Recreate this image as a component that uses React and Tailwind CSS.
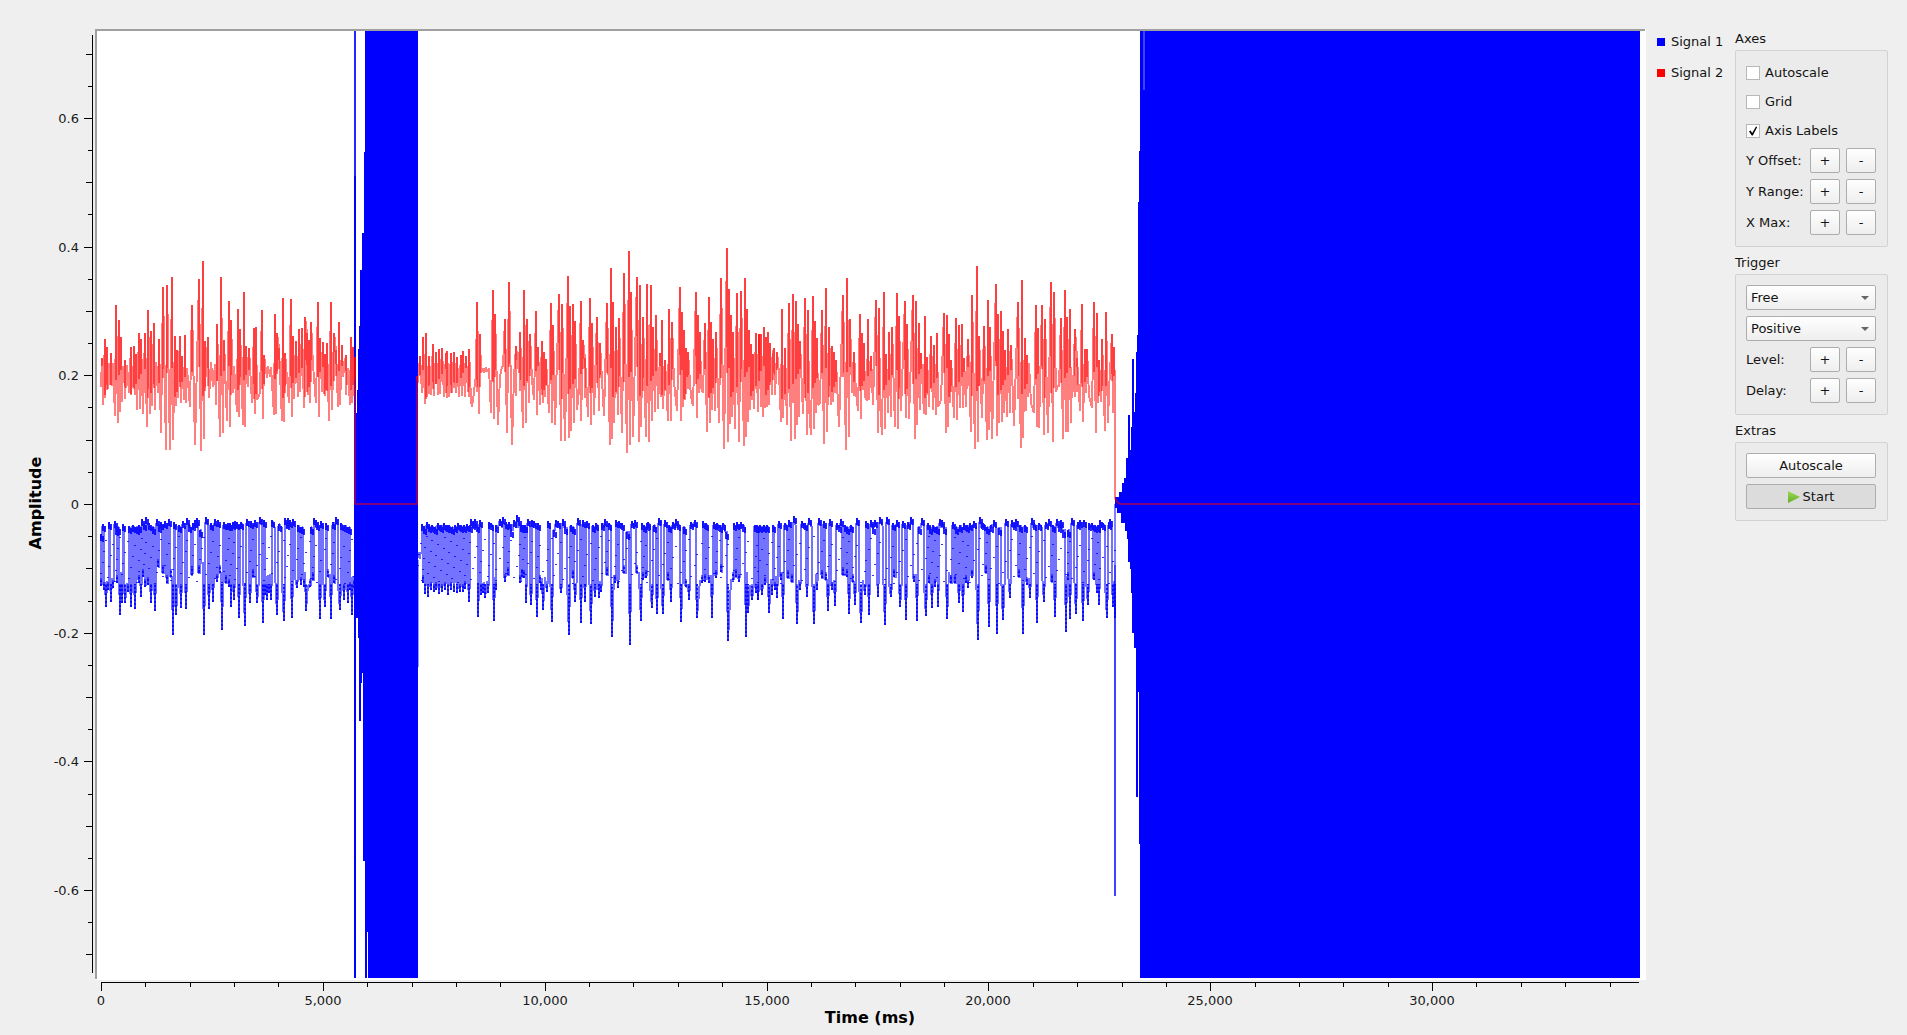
import { useState } from 'react';

// Traces are x,y pairs on a 3x grid, relative to the segment's origin on the plot.
const SIGNAL_2 = [
  {
    origin: 80,
    points:
      '62,440 64,470 66,385 70,525 74,328 76,505 80,352 84,478 87,400 90,465 92,370 96,468 99,400 105,558 108,226 113,580 116,270 120,545 123,322 127,515 130,408 134,470 134,390 138,475 142,405 146,490 152,352 154,495 158,410 160,470 162,348 166,495 168,372 172,540 177,310 181,538 184,328 190,552 194,310 200,592 204,240 209,552 212,303 216,528 221,280 225,540 228,397 233,490 237,328 244,608 250,172 257,660 261,166 270,660 275,140 279,630 285,318 289,527 291,360 295,503 300,318 304,520 307,378 312,510 315,316 318,520 321,415 330,530 336,226 344,645 357,148 363,664 368,92 372,628 375,332 379,440 383,322 388,503 393,395 399,472 404,402 408,525 411,283 419,620 424,140 429,608 432,330 440,573 446,214 450,592 454,270 458,490 462,408 470,545 474,238 477,562 480,298 488,585 491,187 495,590 498,348 504,470 507,355 517,520 521,295 525,553 528,292 532,510 540,490 545,240 549,568 553,375 560,445 565,408 570,440 573,412 581,555 585,253 589,553 592,310 598,355 605,572 609,205 612,577 616,370 627,520 633,208 636,562 639,318 642,508 648,332 654,502 657,298 661,485 665,295 671,535 675,260 680,310 684,495 687,330 690,520 694,275 700,405 709,518 715,216 718,562 720,325 726,485 728,337 732,492 736,372 738,480 741,340 747,572 752,215 757,540 762,310 768,360 773,532 777,277 780,525 786,346 790,440 797,374 800,465 803,415 809,525 813,322 815,520 820,352 822,498 825,380',
  },
  {
    origin: 400,
    points:
      '51,437 55,460 60,377 65,490 69,322 75,523 78,310 82,500 87,378 94,495 99,343 103,497 107,367 113,495 117,358 121,493 127,353 131,500 137,368 139,490 141,363 146,500 153,370 157,490 161,367 168,490 172,380 176,500 182,375 186,497 190,362 195,500 198,378 203,487 207,358 212,510 216,532 222,488 226,455 229,440 232,217 236,552 240,312 243,430 248,415 253,430 258,412 262,425 266,415 272,548 279,181 282,568 286,252 293,586 300,440 306,408 310,410 315,268 321,608 326,155 335,646 343,440 349,347 356,430 360,307 368,594 373,181 378,578 382,268 387,520 391,313 396,450 403,510 408,244 411,555 414,352 420,525 426,334 430,520 433,365 436,500 438,388 446,550 453,220 456,580 460,285 466,586 477,193 483,633 487,222 496,632 504,137 507,625 510,228 514,604 518,223 522,580 525,273 530,540 537,480 542,214 544,574 549,330 556,385 564,562 570,205 573,584 577,280 583,556 591,262 597,543 601,338 613,558 621,220 629,646 633,115 637,627 640,217 643,580 647,290 653,555 657,265 665,609 672,130 681,670 687,64 690,646 693,187 699,622 711,142 717,637 720,166 724,592 729,262 737,622 741,163 748,637 753,166 757,574 760,290 765,547 769,256 774,538 780,370 783,500 786,271 789,538 795,390 803,574 808,238 813,572 817,277 822,455 832,543 840,172 843,572 846,247 849,532 852,300 856,510 859,355 862,440 865,367 872,500 878,527 888,187 892,565 894,256 897,490 900,305 902,470 908,488 914,280 921,607 927,202 931,580 934,277 937,540 940,327 945,542 948,307 957,580 963,145 972,658 981,55 984,637 987,178 991,583 993,256 996,560 999,305 1006,597 1011,190 1018,637 1023,184 1032,648 1035,145 1038,622 1041,238 1045,575 1047,300 1050,540 1053,343 1056,510 1059,373 1062,538 1068,310 1073,545 1077,313',
  },
  {
    origin: 740,
    points:
      '57,313 62,530 64,312 69,562 72,292 76,535 79,320 81,530 84,305 87,525 90,340 95,495 99,370 102,355 105,495 110,365 116,430 122,577 126,238 129,565 135,355 142,585 147,220 153,634 158,193 165,627 168,214 171,585 174,283 177,560 181,333 188,552 195,205 201,616 204,240 207,530 213,616 219,199 223,597 225,274 228,550 230,325 235,525 241,520 246,240 252,643 258,175 262,605 266,290 272,525 276,349 280,516 283,365 286,490 289,390 298,590 309,196 317,660 321,145 327,620 330,268 336,490 342,367 348,485 355,543 360,253 363,568 366,310 369,480 372,340 376,500 380,514 384,268 388,510 392,378 400,525 408,211 414,610 417,235 420,520 427,615 432,187 436,597 438,372 443,550 447,307 452,560 456,292 464,590 471,190 474,597 478,257 484,543 495,214 498,565 500,283 506,568 519,196 524,627 528,214 532,585 537,280 540,540 543,370 552,553 555,259 558,555 562,380 568,530 573,319 578,540 583,346 588,555 591,310 595,530 603,510 612,250 617,608 621,256 624,590 627,313 630,520 634,390 637,435 643,565 648,265 652,570 656,284 661,535 666,283 669,535 673,385 679,532 684,328 692,605 697,196 705,658 711,109 715,637 718,319 725,565 732,289 740,630 744,211 748,600 750,290 757,628 768,163 771,619 774,253 778,580 783,244 787,575 789,304 793,550 796,360 800,560 804,298 810,550 813,346 822,587 835,217 842,655 846,151 850,625 855,325 859,543 861,376 864,500 867,400 873,520 881,548 888,226 892,590 894,295 898,595 907,226 912,615 915,268 925,610 934,157 939,637 942,187 947,485 954,465 958,470 963,265 969,628 975,181 979,605 981,262 985,605 989,238 992,580 995,435 1000,487 1005,298 1011,385 1020,544 1026,223 1030,577 1034,358 1038,490 1041,358 1046,497 1055,535 1062,217 1068,610 1071,250 1074,520 1078,390 1082,515 1087,328 1096,602 1099,247 1103,580 1108,480 1116,313 1120,548 1122,352 1125,480',
  },
];

const SIGNAL_1 = [
  {
    origin: 80,
    points:
      '62,912 64,1068 69,882 73,1080 78,1130 84,1080 87,876 92,1115 98,1075 104,872 108,895 112,1060 115,890 120,1155 126,1120 129,882 136,1120 143,1085 147,888 152,1130 159,884 165,1138 171,892 176,1060 178,885 182,1100 186,866 190,1040 192,880 194,1070 198,862 203,1065 207,878 214,1118 219,892 225,1143 230,868 234,1010 238,885 242,875 250,1030 255,872 261,1060 267,868 274,1040 279,1215 281,876 288,1155 296,886 302,1135 309,873 317,1138 322,865 327,885 336,1035 340,880 345,870 352,865 357,1030 360,900 366,1000 372,1215 378,862 388,1138 394,878 399,1115 404,868 411,1055 414,870 420,1030 427,1200 432,876 439,1060 443,880 447,1070 450,880 454,1130 459,875 462,1110 466,872 471,875 477,1165 483,875 494,1187 500,866 510,1120 514,872 520,1040 525,870 531,1120 540,860 549,1178 552,870 556,1095 560,1110 566,1090 572,1110 577,870 590,1155 596,882 612,1173 615,864 620,875 625,865 630,870 636,1165 640,868 650,1075 654,885 662,1065 666,890 672,1070 679,1143 690,1070 692,890 698,1050 702,865 708,870 712,880 719,1168 724,872 735,1130 738,880 745,1040 753,1168 758,875 762,1060 768,862 780,1140 784,878 791,1110 795,886 803,1120 807,890 811,1080 816,1155 822,1075',
  },
  {
    origin: 400,
    points:
      '54,970 58,985 62,968 65,882 69,1060 72,890 76,1092 80,875 84,1100 88,885 93,1080 97,885 101,1085 105,890 109,1080 113,880 118,1092 122,885 127,1085 131,880 136,1080 140,885 144,1095 148,884 153,1080 157,892 161,1085 165,886 170,1088 174,880 179,1085 183,886 188,1085 192,885 196,1078 200,882 207,1115 210,885 212,866 220,875 226,868 231,885 235,1160 240,870 243,1095 250,1090 256,1105 265,1090 267,875 273,878 282,1172 289,1080 289,885 300,868 308,860 315,1055 318,875 324,1035 328,875 334,900 342,870 350,855 356,868 360,1060 363,885 366,1040 369,885 373,1045 375,885 378,1118 383,868 392,1125 395,870 402,872 410,1160 414,880 421,1060 424,1080 430,1140 440,1085 444,872 456,1176 461,900 467,870 473,872 482,1090 489,866 496,890 507,1215 512,885 518,1045 520,890 525,1115 534,865 544,1180 549,870 556,1115 562,872 573,1182 579,885 585,1100 588,878 597,1105 604,1085 606,880 614,868 620,1035 626,878 637,1222 644,1060 648,870 654,1075 657,872 666,880 672,1030 681,905 690,1245 697,872 705,870 712,1030 722,1172 726,880 729,1050 733,885 737,1045 741,880 745,875 757,1135 763,885 771,1152 778,865 789,1152 796,870 803,1050 807,885 814,1115 820,875 828,868 833,880 844,1177 852,890 858,1070 866,1110 873,875 884,870 892,1163 905,1060 908,872 915,1055 919,880 928,1060 935,1165 941,875 948,1045 951,878 960,885 964,1025 968,880 977,905 985,1233 1000,1050 1003,878 1007,1040 1012,875 1018,1055 1023,876 1030,885 1037,1220 1045,1150 1056,1110 1064,885 1068,1090 1072,885 1075,1110',
  },
  {
    origin: 740,
    points:
      '55,1110 60,885 66,1095 71,885 76,1065 80,885 87,1150 95,1095 99,885 104,1080 110,1105 116,872 122,1050 129,1168 135,878 144,1045 147,870 156,1055 162,858 172,1183 181,1080 187,872 195,880 201,1100 207,865 222,1183 232,1080 238,865 247,1045 253,872 258,1050 264,1143 271,868 276,1080 284,1128 291,880 297,885 302,868 308,1035 315,885 320,1040 322,890 327,1152 333,885 338,1055 345,1125 352,865 363,1180 374,1095 378,872 387,1155 393,870 399,890 405,870 414,1100 420,860 434,1186 440,860 453,1100 458,880 462,1040 470,870 480,1130 489,872 497,1170 505,875 513,862 522,1055 531,1172 537,890 547,865 558,1158 563,880 567,1060 570,890 575,1135 580,885 585,1070 590,890 594,1130 600,868 606,870 612,890 621,1168 632,1060 638,875 645,1060 648,890 657,1120 660,885 668,1145 673,880 677,1060 681,885 684,1075 690,880 697,1045 703,872 714,1230 719,862 725,875 730,880 739,1030 742,890 747,1190 752,885 761,870 771,1213 776,895 788,1170 797,868 810,1103 815,870 822,880 828,866 836,1040 840,885 849,1213 855,885 862,1065 870,1105 876,865 883,880 890,1180 897,880 911,1115 917,875 928,868 936,1055 939,885 945,1162 950,868 956,885 962,870 970,900 978,1205 985,1050 985,900 990,1168 995,865 1008,1152 1014,875 1020,870 1029,1173 1033,870 1044,1125 1048,878 1056,880 1061,1050 1065,885 1070,1090 1073,885 1076,1125 1080,870 1090,878 1101,1165 1106,875 1111,866 1118,1130 1124,1165',
  },
];

const parse = ({ origin, points }) =>
  points.split(' ').map((pair) => {
    const [x, y] = pair.split(',').map(Number);
    return [Math.round(origin + x / 3), Math.round(230 + y / 3)];
  });

const toPath = (pts) => 'M' + pts.map((p) => p.join(' ')).join('L');

const clamp = (v, lo, hi) => Math.min(hi, Math.max(lo, v));

// The signal switches between two shelves, so each swing is a vertical run
// halfway between the turning points.
const toSwitched = (pts) => {
  let d = `M${pts[0].join(' ')}`;
  for (let i = 1; i < pts.length; i++) {
    const [x0, y0] = pts[i - 1];
    const [x1, y1] = pts[i];
    const xm = Math.round((x0 + x1) / 2);
    const low = 572 + ((i * 13) % 14);
    d += `L${xm} ${clamp(y0, 528, low)}V${clamp(y1, 528, low)}L${x1} ${y1}`;
  }
  return d;
};

const red = SIGNAL_2.map(parse);
const blue = SIGNAL_1.map(parse);

const peaks = red
  .flat()
  .filter(([, y]) => y < 362)
  .map(([x, y], i) => `M${x} ${y}V${366 + ((i * 29) % 34)}`)
  .join('');

// darker caps on the upper shelf, dashes down the spikes of the lower one
const caps = blue
  .flat()
  .filter(([, y]) => y < 535)
  .map(([x, y]) => `M${x} ${y}v7M${x + 2} ${y + 2}v6`)
  .join('');
const spikes = blue
  .flat()
  .filter(([, y]) => y > 565)
  .map(([x, y]) => `M${x} ${y}V${Math.min(y - 8, 584)}`)
  .join('');
const dashes = blue
  .flat()
  .map(([x], i) => `M${x - 1} ${536 + ((i * 37) % 48)}h2`)
  .join('');

const BURST_1 =
  'M356 413H357V390H358V349H359V326H360V270H362V233H364V152H365V31H418V978H368V932H367V978H365V861H363V673H362V683H361V721H359V638H358V618H356Z';
const BURST_2 =
  'M1115 497H1119V492H1122V483H1124V478H1126V458H1128V415H1130V450H1131V427H1132V359H1134V412H1135V393H1136V352H1137V335H1138V202H1139V151H1140V31H1640V978H1140V844H1139V692H1138V797H1136V648H1134V633H1132V593H1131V569H1130V562H1128V539H1127V531H1125V523H1121V513H1117V508H1115Z';

const yTicks = Array.from({ length: 29 }, (_, i) => i - 14);
const xTicks = Array.from({ length: 35 }, (_, i) => i);

function Chart() {
  return (
    <svg viewBox="0 0 1650 1035" className="block h-auto w-full" role="img" aria-label="Amplitude over time">
      <rect x="95" y="29" width="1551" height="951" fill="#fff" />
      <path d="M95 29H1645V31H97V979H95Z" fill="#a0a0a0" />

      <g shapeRendering="crispEdges" fill="#000">
        <rect x="92" y="35" width="1" height="938" />
        <rect x="101" y="982" width="1538" height="1" />
        {yTicks.map((i) => {
          const len = i % 4 === 0 ? 8 : i % 2 === 0 ? 6 : 4;
          return <rect key={i} x={92 - len} y={Math.round(504 - i * 32.17)} width={len} height="1" />;
        })}
        {xTicks.map((i) => (
          <rect key={i} x={Math.round(101 + i * 44.37)} y="983" width="1" height={i % 5 === 0 ? 8 : 4} />
        ))}
      </g>

      <g fontSize="13" fill="#1a1a1a">
        {[0.6, 0.4, 0.2, 0, -0.2, -0.4, -0.6].map((v) => (
          <text key={v} x="79" y={Math.round(509 - v * 643.4)} textAnchor="end">
            {v}
          </text>
        ))}
        {[0, 5, 10, 15, 20, 25, 30].map((v) => (
          <text key={v} x={Math.round(101 + v * 44.37)} y="1005" textAnchor="middle">
            {(v * 1000).toLocaleString('en-US')}
          </text>
        ))}
      </g>
      <g fontSize="16" fontWeight="700" fill="#000" textAnchor="middle">
        <text x="870" y="1023">Time (ms)</text>
        <text transform="translate(41 503) rotate(-90)">Amplitude</text>
      </g>

      {/* Signal 1 */}
      <g fill="none" stroke="#00f" strokeWidth="2" strokeLinejoin="bevel" shapeRendering="crispEdges">
        {blue.map((pts, i) => (
          <path key={i} d={toSwitched(pts)} strokeOpacity="0.55" />
        ))}
        <path d={spikes} strokeOpacity="0.5" />
        <path d={spikes} strokeOpacity="0.8" strokeDasharray="2 2" />
        <path d={caps} strokeOpacity="0.85" />
        <path d={dashes} strokeWidth="1" strokeOpacity="0.8" />
      </g>
      <g fill="#00f" shapeRendering="crispEdges">
        <path d={BURST_1} />
        <path d={BURST_2} />
        <rect x="354" y="31" width="2" height="145" opacity="0.85" />
        <rect x="354" y="176" width="2" height="802" />
        <rect x="418" y="560" width="1" height="107" opacity="0.4" />
        <rect x="1114" y="504" width="2" height="61" opacity="0.5" />
        <rect x="1114" y="565" width="2" height="331" opacity="0.75" />
        <rect x="1143" y="31" width="2" height="59" fill="#4040ff" />
      </g>

      {/* Signal 2 */}
      <g fill="none" stroke="#f00" strokeWidth="2" strokeOpacity="0.5" strokeLinejoin="bevel">
        {red.map((pts, i) => (
          <path key={i} d={toPath(pts)} shapeRendering="crispEdges" />
        ))}
        <path d={peaks} shapeRendering="crispEdges" />
        <path d="M355 357V504H417V376" />
        <path d="M1115 390V498L1117 502L1120 504H1640" />
      </g>
    </svg>
  );
}

const BUTTON =
  'h-[25px] rounded-[2px] border border-[#adadad] bg-linear-to-b from-white to-[#eeeeee] leading-none active:bg-[#dcdcdc] active:bg-none';

function Group({ title, children }) {
  return (
    <section>
      <h2 className="h-5 leading-5">{title}</h2>
      <div className="mt-px mb-[6px] flex flex-col gap-[6px] rounded-[2px] border border-[#d2d2d2] bg-[#ebebeb] pt-[10px] pr-[11px] pb-[11px] pl-[10px]">
        {children}
      </div>
    </section>
  );
}

function Check({ label, checked, onChange }) {
  return (
    <label className="flex h-[14px] items-center gap-[5px]">
      <span className="relative block size-[14px]">
        <input
          type="checkbox"
          checked={checked}
          onChange={(e) => onChange(e.target.checked)}
          className="block size-[14px] appearance-none border border-[#b8b8b8] bg-white"
        />
        {checked && (
          <svg viewBox="0 0 14 14" className="pointer-events-none absolute inset-0 size-[14px]">
            <path d="M3 7.5L4.5 6.5L6.2 9L10 2.5L11.2 3L6.8 11.5H5.8Z" fill="#000" />
          </svg>
        )}
      </span>
      {label}
    </label>
  );
}

function Stepper({ label }) {
  return (
    <div className="flex items-center gap-[6px]">
      <span className="flex-1 whitespace-nowrap">{label}:</span>
      <button type="button" aria-label={`Increase ${label}`} className={`${BUTTON} w-[30px]`}>+</button>
      <button type="button" aria-label={`Decrease ${label}`} className={`${BUTTON} w-[30px]`}>-</button>
    </div>
  );
}

function Select({ label, options }) {
  return (
    <div className="relative">
      <select aria-label={label} className={`${BUTTON} block w-full appearance-none pr-5 pl-[4px]`}>
        {options.map((o) => (
          <option key={o}>{o}</option>
        ))}
      </select>
      <svg viewBox="0 0 8 4" className="pointer-events-none absolute top-[11px] right-[7px] h-1 w-2">
        <path d="M0 0H8L4 4Z" fill="#666" />
      </svg>
    </div>
  );
}

export default function App() {
  const [autoscale, setAutoscale] = useState(false);
  const [grid, setGrid] = useState(false);
  const [axisLabels, setAxisLabels] = useState(true);

  return (
    <div className="flex min-h-screen items-start bg-[#efefef] font-['DejaVu_Sans',sans-serif] text-[13px] text-[#141414]">
      <main className="min-w-0 flex-1">
        <Chart />
      </main>

      <ul className="w-[85px] shrink-0 pt-[26px] pl-[7px]">
        <li className="flex h-[31px] items-center gap-[6px] whitespace-nowrap">
          <span className="size-2 bg-[#0000ff]" />
          Signal 1
        </li>
        <li className="flex h-[31px] items-center gap-[6px] whitespace-nowrap">
          <span className="size-2 bg-[#ff0000]" />
          Signal 2
        </li>
      </ul>

      <aside className="mr-[19px] w-[153px] shrink-0 pt-[29px]">
        <Group title="Axes">
          <div className="flex flex-col gap-[15px] pt-[5px] pb-1">
            <Check label="Autoscale" checked={autoscale} onChange={setAutoscale} />
            <Check label="Grid" checked={grid} onChange={setGrid} />
            <Check label="Axis Labels" checked={axisLabels} onChange={setAxisLabels} />
          </div>
          <Stepper label="Y Offset" />
          <Stepper label="Y Range" />
          <Stepper label="X Max" />
        </Group>

        <Group title="Trigger">
          <Select label="Trigger mode" options={['Free', 'Auto', 'Norm', 'Tag']} />
          <Select label="Trigger slope" options={['Positive', 'Negative']} />
          <Stepper label="Level" />
          <Stepper label="Delay" />
        </Group>

        <Group title="Extras">
          <button type="button" className={BUTTON}>Autoscale</button>
          <button
            type="button"
            className="flex h-[25px] items-center justify-center gap-[3px] rounded-[2px] border border-[#adadad] bg-[#dcdcdc] leading-none"
          >
            <svg viewBox="0 0 12 12" className="size-3">
              <defs>
                <linearGradient id="play" x1="0" y1="0" x2="0" y2="1">
                  <stop offset="0" stopColor="#a0d85c" />
                  <stop offset="1" stopColor="#62b022" />
                </linearGradient>
              </defs>
              <path d="M0 0L12 6L0 12Z" fill="url(#play)" />
            </svg>
            Start
          </button>
        </Group>
      </aside>
    </div>
  );
}
